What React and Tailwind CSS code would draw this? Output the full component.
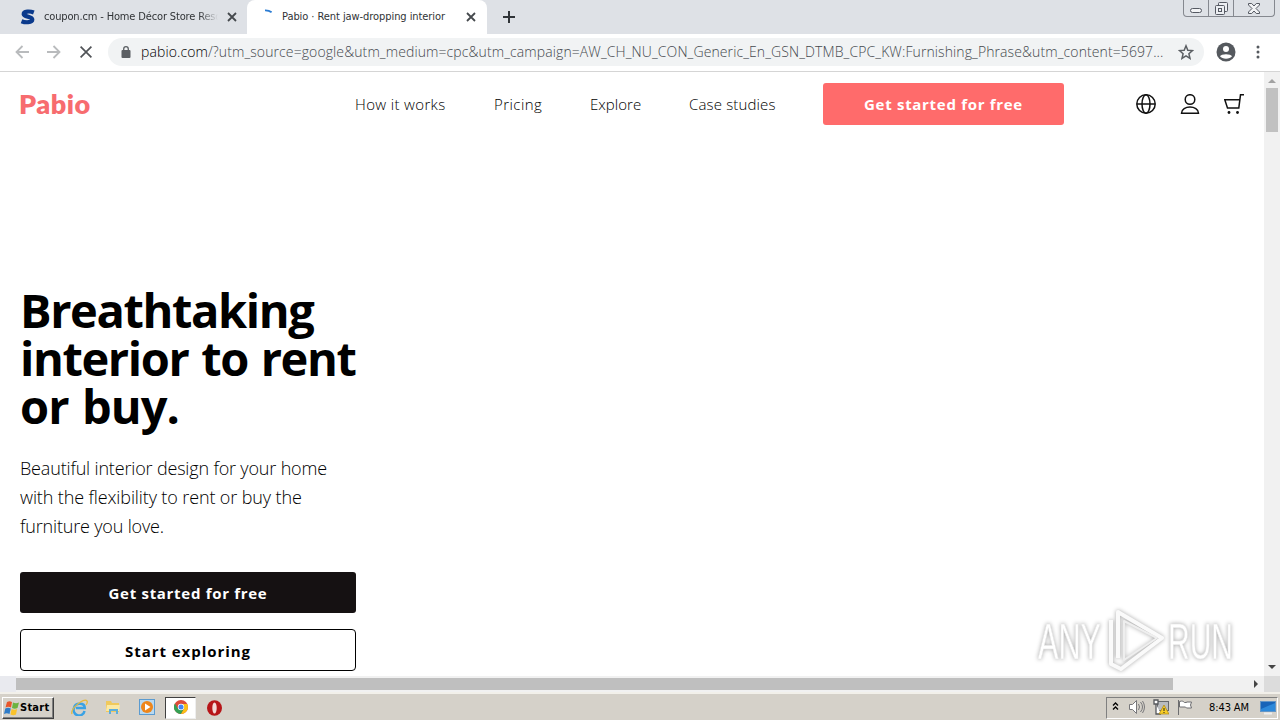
import React from "react";

const NAV = [
  { label: "How it works", cls: "w-[91px] mr-12 tracking-[0.35px]" },
  { label: "Pricing", cls: "w-[49px] mr-[47px] tracking-[0.45px]" },
  { label: "Explore", cls: "w-[51px] mr-12 tracking-[0.05px]" },
  { label: "Case studies", cls: "w-[86px] mr-12 tracking-[0.15px]" },
];

function Cross({ className }) {
  return (
    <svg className={className} viewBox="0 0 10 10" fill="none" stroke="currentColor" strokeWidth="1.8">
      <path d="M1 1l8 8M9 1l-8 8" />
    </svg>
  );
}

function TabStrip() {
  return (
    <div className="h-[34px] flex bg-[#dee1e6] text-[11px] text-[#303336] font-['DejaVu_Sans_Condensed','DejaVu_Sans',sans-serif]">
      <div className="w-[247px] flex items-center pl-5 rounded-br-lg">
        <svg className="w-4 h-4 shrink-0" viewBox="0 0 16 16" fill="none" stroke="#0b3a8c" strokeWidth="4.2">
          <path d="M13.800 3.500C10 2 3.500 2 3.700 5.200 4 8.200 12.300 7 12.300 10.600 12.300 14 5 13.600 1.500 12.200" />
        </svg>
        <div className="ml-2 pt-[1px] w-[174px] overflow-hidden whitespace-nowrap tracking-[-0.15px] [mask-image:linear-gradient(to_right,black_155px,transparent_174px)]">
          coupon.cm - Home Décor Store Resource
        </div>
        <Cross className="ml-[9px] w-[10px] h-[10px] text-[#45494d]" />
      </div>
      <div className="w-[240px] flex items-center bg-white rounded-t-lg">
        <svg className="ml-[10px] w-4 h-4 shrink-0" viewBox="0 0 16 16" fill="none" stroke="#2b7cd3" strokeWidth="1.8">
          <path d="M8 1.300c2.600-.1 4.800.6 6.600 2" />
        </svg>
        <div className="ml-[9px] pt-[1px] w-[174px] whitespace-nowrap tracking-[-0.07px]">Pabio · Rent jaw-dropping interior</div>
        <Cross className="ml-[10px] w-[10px] h-[10px] text-[#45494d]" />
      </div>
      <div className="flex-1 flex items-center pl-4 bg-[#dee1e6]">
        <svg className="w-3 h-3" viewBox="0 0 12 12" stroke="#303438" strokeWidth="2">
          <path d="M6 0v12M0 6h12" />
        </svg>
      </div>
      <div className="mr-[5px] w-[92px] h-[17px] flex border border-t-0 border-[#85888f] rounded-b-[4px] text-[#555962]">
        <div className="w-[25px] flex justify-center items-center border-r border-[#85888f]">
          <div className="mt-1 w-3 h-[5px] border border-current rounded-sm bg-[#f2f3f5]" />
        </div>
        <div className="w-[25px] flex justify-center items-center border-r border-[#85888f]">
          <svg className="w-[13px] h-[13px]" viewBox="0 0 13 13" fill="#eceef2" stroke="currentColor">
            <rect x="3.500" y=".5" width="9" height="9" rx="1" />
            <rect x=".5" y="3.500" width="9" height="9" rx="1" />
            <rect x="3.500" y="6.500" width="3" height="3" />
          </svg>
        </div>
        <div className="flex-1 flex justify-center items-center">
          <svg className="w-3 h-[11px]" viewBox="0 0 12 11" fill="#f2f3f5" stroke="currentColor" strokeWidth="1">
            <path d="M.5.500h3.200L6 3l2.300-2.500h3.200v1.500L8 5.500 11.500 9v1.500H8.300L6 8l-2.300 2.500H.5V9L4 5.500.5 2z" />
          </svg>
        </div>
      </div>
    </div>
  );
}

function Toolbar() {
  return (
    <div className="h-[38px] flex items-center bg-white border-b border-[#d5d5d5]">
      <svg className="ml-[15px] mb-[2px] w-[14px] h-[14px]" viewBox="0 0 14 14" fill="none" stroke="#b9bbbd" strokeWidth="1.800">
        <path d="M14 7H1.500M7.500 1L1.500 7l6 6" />
      </svg>
      <svg className="ml-[18px] mb-[2px] w-[14px] h-[14px]" viewBox="0 0 14 14" fill="none" stroke="#b9bbbd" strokeWidth="1.800">
        <path d="M0 7h12.500M6.500 1l6 6-6 6" />
      </svg>
      <svg className="ml-[19px] mb-[2px] w-3 h-3" viewBox="0 0 12 12" fill="none" stroke="#505357" strokeWidth="1.700">
        <path d="M.6.600l10.800 10.800M11.400.600L.6 11.400" />
      </svg>
      <div className="ml-4 mb-[1px] w-[1096px] h-7 flex items-center rounded-full bg-[#f1f3f4]">
        <svg className="ml-[13px] mb-[1px] w-[10px] h-3 shrink-0" viewBox="0 0 10 12">
          <rect x=".5" y="4" width="9" height="8" rx="1" fill="#5b5f63" />
          <path d="M2.700 5V3a2.300 2.300 0 014.600 0v2" fill="none" stroke="#5b5f63" strokeWidth="1.300" />
        </svg>
        <div className="ml-[10px] mb-[1px] w-[1025px] whitespace-nowrap text-[14px] leading-5 font-light text-[#45494e] tracking-[0.1px] font-['Open_Sans',sans-serif]">
          <span className="text-black">pabio.com</span>/?utm_source=google&amp;utm_medium=cpc&amp;utm_campaign=AW_CH_NU_CON_Generic_En_GSN_DTMB_CPC_KW:Furnishing_Phrase&amp;utm_content=5697...
        </div>
        <svg className="ml-[12px] mb-[1px] w-4 h-4 shrink-0" viewBox="0 0 16 16" fill="none" stroke="#5b5f63" strokeWidth="1.500">
          <path d="M8 1.800l1.800 4.400 4.700.4-3.600 3.100 1.100 4.600L8 11.800l-4 2.500 1.100-4.600L1.500 6.600l4.700-.4z" />
        </svg>
      </div>
      <svg className="ml-3 mb-[2px] w-5 h-5" viewBox="0 0 20 20">
        <circle cx="10" cy="10" r="9.500" fill="#55595e" />
        <circle cx="10" cy="7" r="3" fill="#fff" />
        <path d="M4 14.200C5 11.500 15 11.500 16 14.200 14 17.500 6 17.500 4 14.200z" fill="#fff" />
      </svg>
      <svg className="ml-[20px] mb-[2px] w-1 h-[14px]" viewBox="0 0 4 14" fill="#55595e">
        <circle cx="2" cy="2" r="1.500" />
        <circle cx="2" cy="7" r="1.500" />
        <circle cx="2" cy="12" r="1.500" />
      </svg>
    </div>
  );
}

function Header() {
  return (
    <header className="h-16 flex items-center">
      <div className="ml-[19px] w-[336px] pb-[1px] text-[27px] leading-none font-extrabold text-[#f76c6f] tracking-[0.5px] font-['Lato',sans-serif]">Pabio</div>
      {NAV.map(item => (
        <a key={item.label} className={`${item.cls} whitespace-nowrap text-[15px] font-light text-black`}>{item.label}</a>
      ))}
      <button className="w-[241px] h-[42px] rounded-[3px] bg-[#ff6b6b] text-[15px] font-bold text-white tracking-[0.7px]">Get started for free</button>
      <svg className="ml-[72px] w-5 h-5" viewBox="0 0 20 20" fill="none" stroke="#111" strokeWidth="1.500">
        <circle cx="10" cy="10" r="9.200" />
        <ellipse cx="10" cy="10" rx="4" ry="9.200" />
        <path d="M1 10h18" />
      </svg>
      <svg className="ml-[24px] w-5 h-5" viewBox="0 0 20 20" fill="none" stroke="#111" strokeWidth="1.500">
        <circle cx="10" cy="5.500" r="4.800" />
        <path d="M1.500 19.200c0-8.200 17-8.200 17 0z" />
      </svg>
      <svg className="ml-[24px] w-5 h-5" viewBox="0 0 20 20" fill="none" stroke="#111" strokeWidth="1.500">
        <path d="M20 .8h-3.500L14.800 14H3.500L.8 5.800h15" />
        <circle cx="5" cy="18.500" r="1.400" fill="#111" stroke="none" />
        <circle cx="13.500" cy="18.500" r="1.400" fill="#111" stroke="none" />
      </svg>
    </header>
  );
}

function Hero() {
  return (
    <main className="mt-[150px] ml-5 w-[336px] text-black">
      <h1 className="whitespace-nowrap text-[47px] leading-[48px] font-bold [word-spacing:2px]">
        <span className="block tracking-[-1.4px]">Breathtaking</span>
        <span className="block tracking-[-1.4px]">interior to rent</span>
        <span className="block tracking-[-0.9px]">or buy.</span>
      </h1>
      <p className="mt-[24px] whitespace-nowrap text-[18px] leading-[29px] font-light tracking-[-0.17px]">
        Beautiful interior design for your home<br />
        <span className="tracking-[-0.12px]">with the flexibility to rent or buy the</span><br />
        furniture you love.
      </p>
      <button className="mt-[31px] pt-[2px] block w-full h-[41px] rounded-[3px] bg-[#151112] text-[15px] font-bold text-white tracking-[0.7px]">Get started for free</button>
      <button className="mt-4 pt-[2px] block w-full h-[42px] rounded-[4px] border border-black text-[15px] font-bold tracking-[0.95px]">Start exploring</button>
    </main>
  );
}

function Watermark() {
  return (
    <svg className="absolute left-[1036px] top-[606px] w-[206px] h-[68px] drop-shadow-[0_0_2px_rgba(0,0,0,0.35)]" viewBox="0 0 206 68">
      <g fill="#fff" stroke="#e6e6e6" strokeWidth=".6" fontFamily="Liberation Sans Narrow, Liberation Sans, sans-serif" fontSize="50">
        <text x="2" y="53" textLength="63" lengthAdjust="spacingAndGlyphs">ANY</text>
        <text x="132" y="53" textLength="65" lengthAdjust="spacingAndGlyphs">RUN</text>
      </g>
      <g fill="none" stroke="#fafafa" strokeWidth="4" strokeLinejoin="round">
        <path d="M82 52V6l44 26-41 31-10-5V14" />
        <path d="M88 15v39l33-22z" stroke="#eee" strokeWidth="2" />
      </g>
    </svg>
  );
}

function Arrow({ d, className }) {
  return (
    <svg className={className} viewBox="0 0 8 8" fill="currentColor">
      <path d={d} />
    </svg>
  );
}

function Taskbar() {
  return (
    <div className="h-7 flex items-center bg-[#d5d1c9] border-t-2 border-[#f2f0ea] text-[11px] text-black font-['DejaVu_Sans_Condensed','DejaVu_Sans',sans-serif]">
      <div className="ml-[2px] mt-[1px] w-[52px] h-[22px] flex items-center border border-t-white border-l-white border-r-[#404040] border-b-[#404040] shadow-[inset_-1px_-1px_0_#808080] font-bold">
        <svg className="w-4 h-4 shrink-0 ml-[1px]" viewBox="0 0 16 16">
          <path d="M3 2c2-1 3-1 5 0L7 7.500c-2-1-3.500-1-5.500 0z" fill="#e8562b" />
          <path d="M9 2.500c2 1 4 1 6 0L13.500 8c-2 1-3.500 1-5.500 0z" fill="#6cb33f" />
          <path d="M1.300 8.500c2-1 3.500-1 5.500 0L5.500 14c-2-1-3.500-1-5.500 0z" fill="#2f7cc8" />
          <path d="M7.600 9c2 1 3.500 1 5.500 0L12 14.500c-2 1-3.500 1-5.500 0z" fill="#fac32c" />
        </svg>
        <span className="pt-[1px] tracking-[0.25px]">Start</span>
      </div>
      <svg className="ml-[17px] w-[17px] h-[17px]" viewBox="0 0 17 17" fill="none">
        <path d="M13.500 12A5.500 5.500 0 113.200 8.500C4 4 13.600 3 13.800 9H5" stroke="#3aa2e4" strokeWidth="2.500" />
        <path d="M1 15C-1 10 13-2 16 2c.7 1-.3 3-1 4" stroke="#e6b93c" strokeWidth="1.300" />
      </svg>
      <svg className="ml-[17px] w-4 h-4" viewBox="0 0 16 16">
        <path d="M1 2h5l1 2h7v9H1z" fill="#f0c95c" />
        <path d="M2 6h13l-1 6H1z" fill="#fbe9a4" />
        <path d="M4 15v-5h9v5h-2v-3H6v3z" fill="#5eaedb" />
      </svg>
      <svg className="ml-[18px] w-4 h-4" viewBox="0 0 16 16">
        <rect x=".5" y=".5" width="15" height="15" fill="#b9d9f0" stroke="#5b9bd0" />
        <circle cx="8" cy="8" r="6" fill="#ee861b" />
        <path d="M6 4.500v7L11.500 8z" fill="#fff" />
      </svg>
      <div className="ml-[10px] mt-[1px] w-[31px] h-[22px] flex items-center justify-center bg-white border border-t-[#404040] border-l-[#404040] border-[#eee]">
        <svg className="mb-[2px] w-[14px] h-[14px]" viewBox="0 0 14 14">
          <circle cx="7" cy="7" r="7" fill="#dd4b39" />
          <path d="M.9 3.500A7 7 0 007 14l3-5.300H4z" fill="#34a054" />
          <path d="M13.200 4A7 7 0 017 14l3-5.300L7 4z" fill="#fbc116" />
          <circle cx="7" cy="7" r="3.200" fill="#fff" />
          <circle cx="7" cy="7" r="2.500" fill="#4285f4" />
        </svg>
      </div>
      <svg className="ml-[11px] mt-[1px] w-[15px] h-4" viewBox="0 0 15 16">
        <ellipse cx="7.500" cy="8" rx="7.500" ry="7.800" fill="#b71518" />
        <ellipse cx="7.500" cy="8" rx="2.200" ry="5.500" fill="#f3d9d7" />
      </svg>
      <div className="ml-auto mr-[2px] mt-[1px] w-[172px] h-[22px] flex items-center border border-t-[#808080] border-l-[#808080] border-r-white border-b-white">
        <svg className="ml-[5px] mb-1 w-[7px] h-[8px]" viewBox="0 0 7 8" fill="none" stroke="#000" strokeWidth="1.300">
          <path d="M1 3.500L3.500 1 6 3.500M1 7.500L3.500 5 6 7.500" />
        </svg>
        <svg className="ml-[10px] mb-[2px] w-4 h-4" viewBox="0 0 16 16" fill="#fff" stroke="#77777a">
          <path d="M.5 5.500h3l4-4v13l-4-4h-3z" />
          <path d="M9.500 5q2 3 0 6M11.500 3q4 5 0 10M13.500 2q4 6 0 12" fill="none" />
        </svg>
        <svg className="ml-[8px] mb-[2px] w-4 h-4" viewBox="0 0 16 16">
          <rect x="4.500" y="2.500" width="11" height="9" fill="#b9bcc0" stroke="#66696d" />
          <path d="M1 1h4v4H1zM3 5v10h5" fill="#fff" stroke="#55585c" strokeWidth="1.300" />
          <path d="M11 6l5 9H6z" fill="#f8cd26" stroke="#aa8412" strokeWidth=".7" />
          <path d="M11 9v3m0 1v1" stroke="#222" />
        </svg>
        <svg className="ml-[8px] mb-[2px] w-4 h-4" viewBox="0 0 16 16" fill="#fff" stroke="#6d6d70">
          <path d="M1.500 1v15" />
          <path d="M2.500 2.500c3-1 4 0 5 1h2V3h5l-1 3 1 3H9.500l-1-1h-6z" />
        </svg>
        <span className="ml-[16px] pt-[1px] w-[41px] whitespace-nowrap tracking-[-0.1px]">8:43 AM</span>
        <svg className="ml-[10px] w-4 h-[14px]" viewBox="0 0 16 14">
          <rect x=".5" y=".5" width="15" height="10" fill="#1864b8" stroke="#6395c6" />
          <path d="M1 8L15 2v8H1z" fill="#2d89da" />
          <path d="M4 12.500h8" stroke="#eee" strokeWidth="2" />
        </svg>
      </div>
    </div>
  );
}

export default function App() {
  return (
    <div className="relative w-[1280px] h-[720px] flex flex-col overflow-hidden bg-white font-['Open_Sans','Noto_Sans',sans-serif]">
      <TabStrip />
      <Toolbar />
      <div className="h-[604px] flex">
        <div className="w-[1264px] overflow-hidden">
          <Header />
          <Hero />
        </div>
        <div className="w-4 flex flex-col items-center bg-[#f1f1f1]">
          <Arrow className="mt-[5px] w-2 h-2 text-[#a2a2a2]" d="M0 6l4-4 4 4z" />
          <div className="mt-[3px] w-3 h-11 bg-[#c1c1c1]" />
          <Arrow className="mt-auto mb-[5px] w-2 h-2 text-[#454545]" d="M0 2h8L4 6z" />
        </div>
      </div>
      <div className="h-4 flex bg-[#f1f1f1]">
        <div className="w-4 bg-[#e9eaef]" />
        <div className="mt-[2px] w-[1157px] h-3 bg-[#bfbfbf]" />
        <div className="flex-1 flex items-center justify-end pr-1">
          <Arrow className="w-2 h-2 text-[#454545]" d="M2 0v8l4-4z" />
        </div>
        <div className="w-4 bg-[#dcdcdc]" />
      </div>
      <Taskbar />
      <Watermark />
    </div>
  );
}
